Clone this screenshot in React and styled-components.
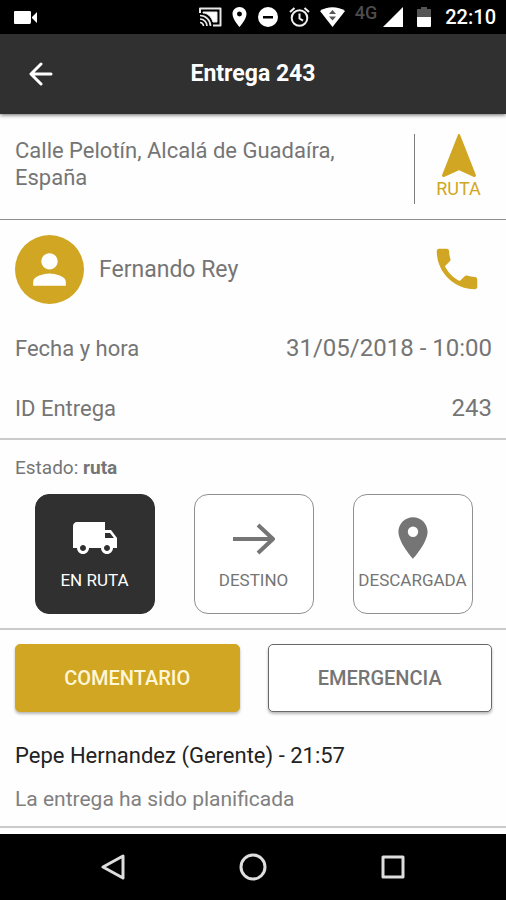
import React from "react";
import styled, { createGlobalStyle, css } from "styled-components";

const GOLD = "#d0a623";
const DARK = "#303030";
const GREY = "#757575";

const GlobalStyle = createGlobalStyle`
  *, *::before, *::after { box-sizing: border-box; }
  body {
    margin: 0;
    background: #fff;
    font-family: Roboto, "Liberation Sans", sans-serif;
    font-size: 22px;
    color: ${GREY};
  }
  button { font: inherit; color: inherit; cursor: pointer; }
`;

const Screen = styled.div`
  min-height: 100vh;
  display: flex;
  flex-direction: column;
  background: #fefefe;
`;

const StatusBar = styled.div`
  height: 34px;
  padding: 0 10px 0 14px;
  display: flex;
  align-items: center;
  background: #000;
  color: #fff;
`;

const StatusIcons = styled.div`
  margin-left: auto;
  display: flex;
  align-items: center;
  gap: 10px;
`;

const Network = styled.span`
  align-self: flex-start;
  margin-right: -4px;
  font-size: 18px;
  line-height: 16px;
  font-weight: 500;
  color: #4c4c4c;
`;

const Power = styled.div`
  display: flex;
  align-items: center;
  gap: 14px;
  margin-left: 4px;
`;

const Clock = styled.time`
  font-size: 20px;
  line-height: 24px;
  font-weight: 500;
`;

const AppBar = styled.header`
  height: 80px;
  padding: 0 20px;
  display: grid;
  grid-template-columns: 42px 1fr 42px;
  align-items: center;
  background: ${DARK};
  color: #fff;
  box-shadow: 0 1px 4px rgba(0, 0, 0, 0.6);
`;

const Title = styled.h1`
  margin: 0;
  font-size: 23px;
  line-height: 28px;
  font-weight: 700;
  text-align: center;
`;

const IconButton = styled.button`
  display: flex;
  flex-direction: column;
  align-items: center;
  justify-content: center;
  padding: 0;
  border: 0;
  background: none;
`;

const Main = styled.main`
  flex: 1;
`;

const Section = styled.section`
  border-bottom: 2px solid #cbcbcb;
`;

const Address = styled(Section)`
  display: flex;
  align-items: flex-start;
  padding: 20px 14px 15px 15px;
  border-bottom: 1px solid #8e8e8e;
`;

const Place = styled.address`
  flex: 1;
  padding: 3px 40px 0 0;
  font-style: normal;
  line-height: 27px;
`;

const RouteButton = styled(IconButton)`
  width: 78px;
  height: 70px;
  padding-left: 10px;
  justify-content: flex-start;
  border-left: 1px solid #7c7c7c;
  color: ${GOLD};
  font-size: 18px;
  line-height: 24px;
`;

const Details = styled(Section)`
  padding: 14px 14px 0 15px;
`;

const Contact = styled.div`
  display: flex;
  align-items: center;
  gap: 15px;
  height: 70px;
`;

const Avatar = styled.span`
  display: flex;
  align-items: center;
  justify-content: center;
  width: 69px;
  height: 69px;
  border-radius: 50%;
  background: ${GOLD};
  color: #fff;
`;

const Name = styled.span`
  flex: 1;
  font-size: 23px;
`;

const CallButton = styled(IconButton)`
  width: 70px;
  height: 60px;
  color: ${GOLD};
`;

const Facts = styled.dl`
  margin: 0;
  padding-top: 14px;
`;

const Fact = styled.div`
  display: flex;
  align-items: center;
  justify-content: space-between;
  height: 60px;
  dt, dd { margin: 0; }
  dd { font-size: 24px; }
`;

const StateSection = styled(Section)`
  padding: 14px 14px 14px 15px;
`;

const StateLabel = styled.p`
  margin: 0 0 12px;
  font-size: 19px;
  line-height: 28px;
`;

const Cards = styled.div`
  display: flex;
  justify-content: space-around;
`;

const Card = styled.button`
  display: flex;
  flex-direction: column;
  align-items: center;
  width: 120px;
  height: 120px;
  padding: 18px 0 0;
  gap: 5px;
  border: 1px solid #909090;
  border-radius: 14px;
  background: #fff;
  color: ${GREY};
  font-size: 17px;
  line-height: 24px;
  ${(p) =>
    p.$active &&
    css`
      border-color: ${DARK};
      background: ${DARK};
      color: #fff;
    `}
`;

const Feed = styled(Section)`
  padding: 14px 14px 14px 15px;
`;

const Actions = styled.div`
  display: flex;
  gap: 28px;
`;

const Action = styled.button`
  flex: 1;
  height: 68px;
  border: 1px solid #686868;
  border-radius: 5px;
  background: #fff;
  color: ${GREY};
  font-size: 20px;
  font-weight: 500;
  box-shadow: 0 2px 3px rgba(0, 0, 0, 0.28);
  ${(p) =>
    p.$primary &&
    css`
      border-color: ${GOLD};
      background: ${GOLD};
      color: #fff6d8;
    `}
`;

const Author = styled.h2`
  margin: 30px 0 0;
  font-size: 22px;
  line-height: 28px;
  font-weight: 400;
  color: #222;
`;

const Message = styled.p`
  margin: 16px 0 0;
  font-size: 21px;
  line-height: 26px;
  color: #808080;
`;

const NavBar = styled.nav`
  height: 66px;
  padding: 0 43px;
  display: grid;
  grid-template-columns: repeat(3, 1fr);
  align-items: center;
  background: #000;
  color: #dedede;
`;

function Icon({ path, box = "0 0 24 24", w = 24, h = w, round = 0 }) {
  return (
    <svg
      width={w}
      height={h}
      viewBox={box}
      fill="currentColor"
      stroke={round ? "currentColor" : "none"}
      strokeWidth={round}
      strokeLinejoin="round"
      aria-hidden="true"
    >
      <path fillRule="evenodd" d={path} />
    </svg>
  );
}

function LineIcon({ path, w, h, weight, cap = "butt" }) {
  return (
    <svg
      width={w}
      height={h}
      viewBox={`0 0 ${w} ${h}`}
      fill="none"
      stroke="currentColor"
      strokeWidth={weight}
      strokeLinecap={cap}
      strokeLinejoin="round"
      aria-hidden="true"
    >
      <path d={path} />
    </svg>
  );
}

const PIN =
  "M12 2C8.13 2 5 5.13 5 9c0 5.25 7 13 7 13s7-7.75 7-13c0-3.87-3.13-7-7-7zm0 9.5a2.5 2.5 0 0 1 0-5 2.5 2.5 0 0 1 0 5z";
const PERSON =
  "M12 12c2.21 0 4-1.79 4-4s-1.79-4-4-4-4 1.79-4 4 1.79 4 4 4zm0 2c-2.67 0-8 1.34-8 4v2h16v-2c0-2.66-5.33-4-8-4z";
const PHONE =
  "M6.62 10.79c1.44 2.83 3.76 5.14 6.59 6.59l2.2-2.2c.27-.27.67-.36 1.02-.24 1.12.37 2.33.57 3.57.57.55 0 1 .45 1 1V20c0 .55-.45 1-1 1-9.39 0-17-7.61-17-17 0-.55.45-1 1-1h3.5c.55 0 1 .45 1 1 0 1.25.2 2.45.57 3.57.11.35.03.74-.25 1.02l-2.2 2.2z";
const TRUCK =
  "M20 8h-3V4H3c-1.1 0-2 .9-2 2v11h2c0 1.66 1.34 3 3 3s3-1.34 3-3h6c0 1.66 1.34 3 3 3s3-1.34 3-3h2v-5l-3-4zM6 18.5c-.83 0-1.5-.67-1.5-1.5s.67-1.5 1.5-1.5 1.5.67 1.5 1.5-.67 1.5-1.5 1.5zm13.5-9l1.96 2.5H17V9.500zM18 18.500c-.83 0-1.5-.67-1.5-1.5s.67-1.5 1.5-1.5 1.5.67 1.5 1.5-.67 1.5-1.5 1.5z";

function CastIcon() {
  return (
    <svg width="23" height="20" viewBox="0 0 23 20" fill="none" stroke="#e8e8e8" aria-hidden="true">
      <path d="M1 6V1.500h20.500v17H14" strokeWidth="2" strokeLinejoin="round" />
      <path d="M4 5h14v10h-4C12 9 8 6 4 6z" fill="#fff" />
      <path d="M1 8.500a10.500 10.500 0 0 1 10.500 10.500M1 12a7 7 0 0 1 7 7M1 15.500A3.500 3.500 0 0 1 4.500 19" strokeWidth="1.700" />
    </svg>
  );
}

function AlarmIcon() {
  return (
    <svg width="21" height="20" viewBox="0 0 21 20" fill="none" stroke="#f0f0f0" strokeWidth="2" aria-hidden="true">
      <circle cx="10.500" cy="11" r="7.800" />
      <path d="M1 5l4.500-4M20 5l-4.500-4M10.500 6.500V11.500l3.500 2.200" />
    </svg>
  );
}

function WifiIcon() {
  return (
    <svg width="25" height="20" viewBox="0 0 25 20" aria-hidden="true">
      <path fill="#fff" d="M0 4C7-1 18-1 25 4L12.500 20z" />
      <path fill="#555" d="M9 7l3.500-4L16 7zM9 9.500h7l-3.500 4z" />
    </svg>
  );
}

export default function App() {
  return (
    <Screen>
      <GlobalStyle />
      <StatusBar>
        <Icon path="M1 0H15.500Q17 0 17 1V11Q17 13 15.500 13H1Q0 13 0 12V1Q0 0 1 0zM18 6L23 1V12L18 7z" box="0 0 23 13" w={23} h={13} />
        <StatusIcons>
          <CastIcon />
          <Icon path={PIN} box="5 2 14 20" w={15} h={20} />
          <Icon path="M11 0a10 10 0 0 1 0 20a10 10 0 0 1 0-20zM6 9v2.500h10V9z" box="0 0 22 20" w={22} h={20} />
          <AlarmIcon />
          <WifiIcon />
          <Network>4G</Network>
          <Icon path="M20 0V20H0z" box="0 0 20 20" w={20} />
          <Power>
            <svg width="14" height="20" viewBox="0 0 14 20" aria-hidden="true">
              <path fill="#555" d="M4 0h6v2h4v8H0V2h4z" />
              <path fill="#fff" d="M0 10h14v9q0 1-1 1H1q-1 0-1-1z" />
            </svg>
            <Clock>22:10</Clock>
          </Power>
        </StatusIcons>
      </StatusBar>

      <AppBar>
        <IconButton type="button" aria-label="Volver">
          <LineIcon w={24} h={24} weight={3} cap="round" path="M22 12H3M12 2L2 12L12 22" />
        </IconButton>
        <Title>Entrega 243</Title>
      </AppBar>

      <Main>
        <Address>
          <Place>Calle Pelotín, Alcalá de Guadaíra, España</Place>
          <RouteButton type="button">
            <Icon path="M12 2.500L5 20.300l.2.200L12 17.500l6.800 3 .2-.2z" box="4.500 2 15 19" w={34} h={43} round={1} />
            RUTA
          </RouteButton>
        </Address>

        <Details>
          <Contact>
            <Avatar>
              <Icon path={PERSON} w={49} />
            </Avatar>
            <Name>Fernando Rey</Name>
            <CallButton type="button" aria-label="Llamar a Fernando Rey">
              <Icon path={PHONE} w={54} />
            </CallButton>
          </Contact>
          <Facts>
            <Fact>
              <dt>Fecha y hora</dt>
              <dd>31/05/2018 - 10:00</dd>
            </Fact>
            <Fact>
              <dt>ID Entrega</dt>
              <dd>243</dd>
            </Fact>
          </Facts>
        </Details>

        <StateSection>
          <StateLabel>
            Estado: <strong>ruta</strong>
          </StateLabel>
          <Cards>
            <Card type="button" $active aria-pressed="true">
              <Icon path={TRUCK} w={48} h={50} />
              EN RUTA
            </Card>
            <Card type="button" aria-pressed="false">
              <LineIcon w={44} h={50} weight={4} path="M1 26H41M26 12L41 26L26 40" />
              DESTINO
            </Card>
            <Card type="button" aria-pressed="false">
              <Icon path={PIN} w={50} />
              DESCARGADA
            </Card>
          </Cards>
        </StateSection>

        <Feed>
          <Actions>
            <Action type="button" $primary>COMENTARIO</Action>
            <Action type="button">EMERGENCIA</Action>
          </Actions>
          <Author>Pepe Hernandez (Gerente) - 21:57</Author>
          <Message>La entrega ha sido planificada</Message>
        </Feed>
      </Main>

      <NavBar aria-label="Sistema">
        <IconButton type="button" aria-label="Atrás">
          <LineIcon w={26} h={26} weight={3} path="M23 2V24L3 13z" />
        </IconButton>
        <IconButton type="button" aria-label="Inicio">
          <LineIcon w={28} h={28} weight={3} path="M14 2a12 12 0 0 1 0 24a12 12 0 0 1 0-24z" />
        </IconButton>
        <IconButton type="button" aria-label="Recientes">
          <LineIcon w={26} h={26} weight={3} path="M3 3H23V23H3z" />
        </IconButton>
      </NavBar>
    </Screen>
  );
}
